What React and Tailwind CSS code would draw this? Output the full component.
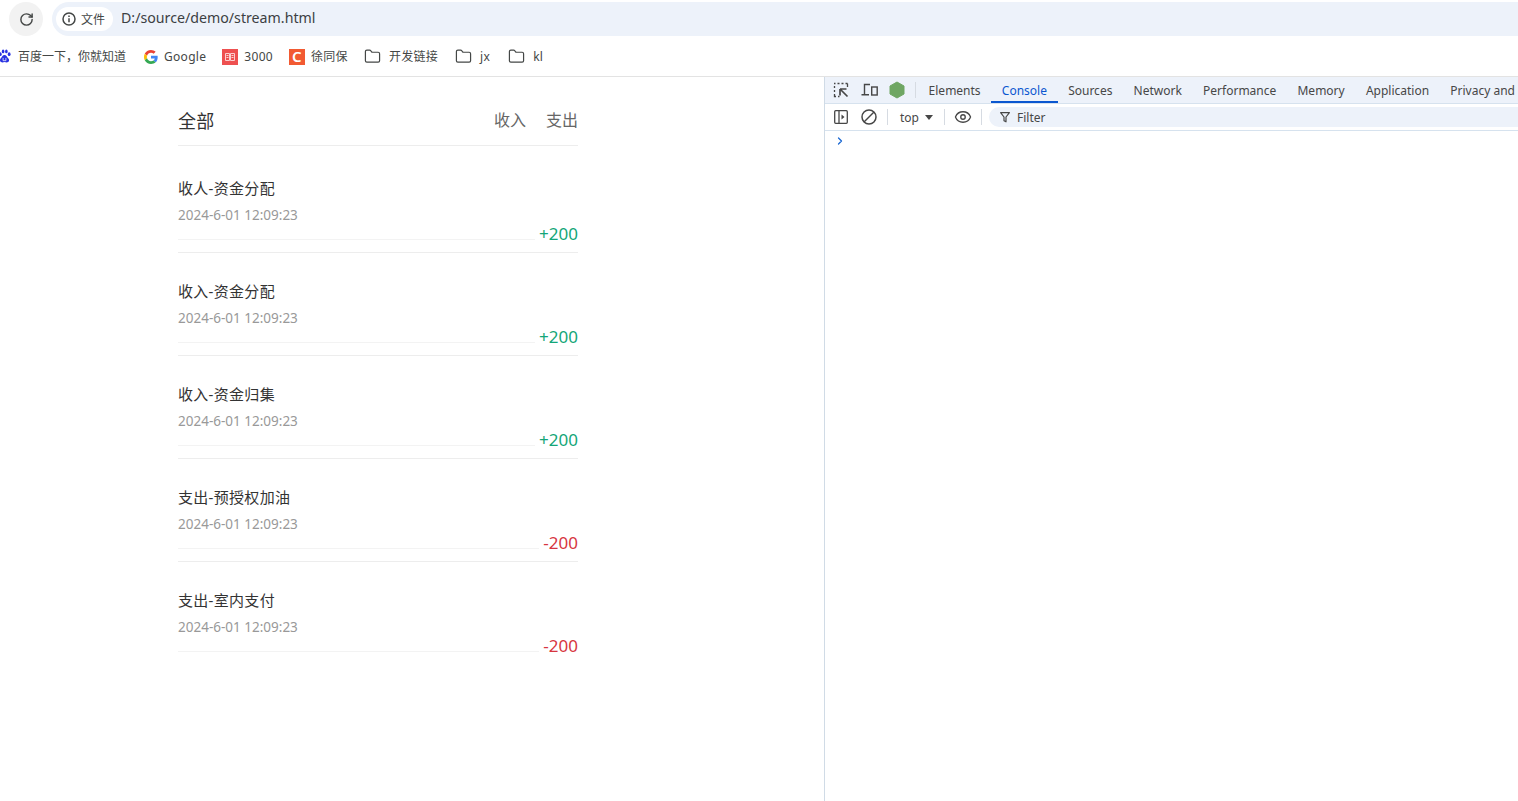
import { RotateCw, Folder, Eye, ChevronRight } from 'lucide-react'

const font = { fontFamily: '"Noto Sans", "Noto Sans CJK SC", sans-serif' }

const rows = [
  { title: '收人-资金分配', amount: '+200', color: 'text-[#14a678]' },
  { title: '收入-资金分配', amount: '+200', color: 'text-[#14a678]' },
  { title: '收入-资金归集', amount: '+200', color: 'text-[#14a678]' },
  { title: '支出-预授权加油', amount: '-200', color: 'text-[#d7363f]' },
  { title: '支出-室内支付', amount: '-200', color: 'text-[#d7363f]' },
]

const tabs = ['Elements', 'Console', 'Sources', 'Network', 'Performance', 'Memory', 'Application', 'Privacy and']

function GoogleIcon() {
  return (
    <svg width="14" height="14" viewBox="0 0 48 48" className="shrink-0">
      <path fill="#EA4335" d="M24 9.500c3.500 0 6.700 1.300 9.100 3.500l6.800-6.800C35.800 2.400 30.300 0 24 0 14.600 0 6.500 5.400 2.600 13.200l7.900 6.100C12.400 13.700 17.700 9.500 24 9.500z" />
      <path fill="#4285F4" d="M46.900 24.500c0-1.600-.1-3.100-.4-4.500H24v9h12.900c-.6 3-2.200 5.500-4.800 7.200l7.700 6c4.500-4.200 7.100-10.300 7.100-17.700z" />
      <path fill="#FBBC05" d="M10.500 28.700c-.5-1.500-.8-3-.8-4.700s.3-3.200.8-4.700l-7.900-6.100C.9 16.500 0 20.100 0 24s.9 7.500 2.600 10.800l7.900-6.100z" />
      <path fill="#34A853" d="M24 48c6.500 0 11.900-2.100 15.900-5.800l-7.700-6c-2.100 1.400-4.900 2.300-8.200 2.300-6.300 0-11.600-4.200-13.500-9.800l-7.900 6.100C6.500 42.600 14.600 48 24 48z" />
    </svg>
  )
}

function BaiduIcon() {
  return (
    <svg width="13" height="15" viewBox="0 0 14 16" fill="#2932e1" className="shrink-0">
      <ellipse cx="2.500" cy="5.500" rx="1.500" ry="2" />
      <ellipse cx="5.500" cy="2.500" rx="1.400" ry="2" />
      <ellipse cx="9" cy="2.500" rx="1.400" ry="2" />
      <ellipse cx="12" cy="5.500" rx="1.500" ry="2" />
      <path d="M7 6.500c-2 0-2.500 2-4 3.500-1.500 1.500-1 4 1 4.300 1.200.2 2-.3 3-.3s2 .5 3.200.3c2-.4 2.300-2.800.8-4.300C9.500 8.500 9 6.500 7 6.500z" />
      <path d="M5.500 9.500v3h3v-3" fill="none" stroke="#fff" strokeWidth="0.800" />
    </svg>
  )
}

function BookIcon() {
  return (
    <span className="flex h-[16px] w-[16px] shrink-0 items-center justify-center bg-[#ee5050]">
      <svg width="10" height="8" viewBox="0 0 10 8" fill="none" stroke="#fbd0d0" strokeWidth="1">
        <path d="M.5.500h4v7h-4zM5.500.500h4v7h-4zM1.500 2.500h2M1.500 4.500h2M6.500 2.500h2M6.500 4.500h2" />
      </svg>
    </span>
  )
}

function Bookmark({ icon, label, className }) {
  return (
    <div className={`flex items-center text-[12px] text-[#444746] ${className}`}>
      {icon}
      <span>{label}</span>
    </div>
  )
}

function FolderIcon() {
  return <Folder size={17} strokeWidth={1.700} className="mr-[8px] shrink-0 text-[#444746]" />
}

function NodeIcon() {
  return (
    <svg width="16" height="18" viewBox="0 0 16 18" className="shrink-0">
      <path fill="#6fa663" stroke="#6fa663" strokeLinejoin="round" d="M8 1 15 5V13L8 17 1 13V5z" />
    </svg>
  )
}

function InspectIcon() {
  return (
    <svg width="16" height="16" viewBox="0 0 16 16" fill="none" stroke="#474747" className="shrink-0">
      <path d="M1 1.500h1.500M4.500 1.500h2M8.500 1.500h2M12.500 1.500h2M1.500 4v2M1.500 8v2M1.500 12v2.500h1.500M14.500 1.500V5M5 14.500h1.500" strokeWidth="1.300" />
      <path d="M7 7h6.500M7 7v6.500M7.500 7.500 14.500 14.500" strokeWidth="1.700" />
    </svg>
  )
}

function DeviceIcon() {
  return (
    <svg width="17" height="16" viewBox="0 0 17 16" fill="none" stroke="#474747" strokeWidth="1.400" className="shrink-0">
      <path d="M9 2.500H3.500V12M0.500 12.700H8" />
      <rect x="10.700" y="5" width="5.500" height="8" />
    </svg>
  )
}

function DockIcon() {
  return (
    <svg width="14" height="14" viewBox="0 0 14 14" fill="none" stroke="#474747" strokeWidth="1.300" className="shrink-0">
      <rect x="0.700" y="0.700" width="12.600" height="12.600" rx="1" />
      <path d="M5 1v12" />
      <path d="M7.500 4.500 10.500 7 7.500 9.500z" fill="#474747" stroke="none" />
    </svg>
  )
}

function ClearIcon() {
  return (
    <svg width="16" height="16" viewBox="0 0 16 16" fill="none" stroke="#474747" strokeWidth="1.500" className="ml-[13px] shrink-0">
      <circle cx="8" cy="8" r="7" />
      <path d="M3 13 13 3" />
    </svg>
  )
}

function FunnelIcon() {
  return (
    <svg width="10" height="11" viewBox="0 0 10 11" fill="none" stroke="#474747" strokeWidth="1.200" className="shrink-0">
      <path d="M.6.700h8.800L6 5v4.800L4 8.700V5z" strokeLinejoin="round" />
    </svg>
  )
}

function InfoIcon() {
  return (
    <svg width="14" height="14" viewBox="0 0 14 14" fill="none" stroke="#444746" strokeWidth="1.500" className="shrink-0">
      <circle cx="7" cy="7" r="6" />
      <path d="M7 6.200V10.300M7 3.600V5" />
    </svg>
  )
}

function Row({ row, last }) {
  return (
    <div className={`pt-[28px] ${last ? '' : 'h-[103px] border-b border-[#ededed]'}`}>
      <div className="h-[62px] border-b border-[#f3f3f3]">
        <div className="text-[15px] leading-[20px] tracking-[0.3px] text-[#333]">{row.title}</div>
        <div className="mt-[7px] text-[13.500px] leading-[20px] text-[#999]">2024-6-01 12:09:23</div>
        <div className="-mt-[1px] flex justify-end">
          <span className={`bg-white pl-[4px] text-[17px] leading-[20px] ${row.color}`}>{row.amount}</span>
        </div>
      </div>
    </div>
  )
}

export default function App() {
  return (
    <div className="flex h-[801px] flex-col overflow-hidden bg-white" style={font}>
      <div className="flex h-[37px] shrink-0 items-start pl-[9px] pt-[2px]">
        <div className="flex h-[34px] w-[34px] items-center justify-center rounded-full bg-[#f2f2f2]">
          <RotateCw size={15} strokeWidth={2.300} className="text-[#444746]" />
        </div>
        <div className="ml-[9px] flex h-[34px] flex-1 items-center rounded-l-[17px] bg-[#edf2fa] pl-[4px]">
          <div className="flex h-[24px] items-center gap-[5px] rounded-full bg-white pl-[6px] pr-[8px]">
            <InfoIcon />
            <span className="pt-[2px] text-[12px] text-[#444746]">文件</span>
          </div>
          <span className="ml-[8px] -mt-[2px] text-[14.200px] text-[#3c4043]">D:/source/demo/stream.html</span>
        </div>
      </div>

      <div className="flex h-[40px] shrink-0 items-center border-b border-[#e3e3e3]">
        <Bookmark className="-ml-[2px]" icon={<span className="mr-[7px]"><BaiduIcon /></span>} label="百度一下，你就知道" />
        <Bookmark className="ml-[18px] tracking-[0.3px]" icon={<span className="mr-[6px]"><GoogleIcon /></span>} label="Google" />
        <Bookmark className="ml-[16px] tracking-[0.3px]" icon={<span className="mr-[6px]"><BookIcon /></span>} label="3000" />
        <Bookmark
          className="ml-[16px] tracking-[0.3px]"
          icon={<span className="mr-[6px] flex h-[16px] w-[16px] shrink-0 items-center justify-center bg-[#f25a32] text-[15px] font-semibold leading-none text-white">C</span>}
          label="徐同保"
        />
        <Bookmark className="ml-[16px] tracking-[0.3px]" icon={<FolderIcon />} label="开发链接" />
        <Bookmark className="ml-[17px] tracking-[0.3px]" icon={<FolderIcon />} label="jx" />
        <Bookmark className="ml-[18px] tracking-[0.3px]" icon={<FolderIcon />} label="kl" />
      </div>

      <div className="flex min-h-0 flex-1">
        <div className="w-[824px] shrink-0 pl-[178px]">
          <div className="w-[400px]">
            <div className="flex h-[69px] items-center justify-between border-b border-[#ededed] pt-[20px]">
              <span className="text-[18px] tracking-[0.3px] text-[#333]">全部</span>
              <div className="-mt-[2px] flex gap-[20px] text-[16px] text-[#666]">
                <span>收入</span>
                <span>支出</span>
              </div>
            </div>
            <div className="pt-[4px]">
              {rows.map((row, i) => (
                <Row key={i} row={row} last={i === rows.length - 1} />
              ))}
            </div>
          </div>
        </div>

        <div className="min-w-0 flex-1 overflow-hidden border-l border-[#d0dbe6]">
          <div className="flex h-[27px] items-center border-b border-[#d6e2ee] bg-[#edf2fa] pl-[8px]">
            <InspectIcon />
            <span className="ml-[12px]"><DeviceIcon /></span>
            <span className="ml-[11px]"><NodeIcon /></span>
            <span className="ml-[10px] h-[16px] w-px shrink-0 bg-[#d6dbe2]" />
            <div className="ml-[2px] flex h-full whitespace-nowrap">
              {tabs.map((t, i) => (
                <div
                  key={t}
                  className={`flex h-full items-center border-b-[2px] px-[10.600px] pt-[4px] text-[12px] ${i === 1 ? 'border-[#0b57d0] text-[#0b57d0]' : 'border-transparent text-[#474747]'}`}
                >
                  {t}
                </div>
              ))}
            </div>
          </div>
          <div className="flex h-[27px] items-center border-b border-[#d6e2ee] pl-[9px]">
            <DockIcon />
            <ClearIcon />
            <span className="ml-[10px] h-[16px] w-px bg-[#d6dbe2]" />
            <span className="ml-[12px] pt-[2px] text-[12px] text-[#474747]">top</span>
            <span className="ml-[6px] h-0 w-0 border-x-[4px] border-t-[5px] border-x-transparent border-t-[#474747]" />
            <span className="ml-[11px] h-[16px] w-px bg-[#d6dbe2]" />
            <Eye size={18} strokeWidth={1.800} className="ml-[9px] text-[#474747]" />
            <span className="ml-[9px] h-[16px] w-px bg-[#d6dbe2]" />
            <div className="ml-[7px] flex h-[20px] flex-1 items-center rounded-l-[10px] bg-[#edf2fa] pl-[11px]">
              <FunnelIcon />
              <span className="ml-[7px] pt-[1px] text-[12px] text-[#474747]">Filter</span>
            </div>
          </div>
          <ChevronRight size={12} strokeWidth={2.500} className="ml-[9px] mt-[4px] text-[#1967d2]" />
        </div>
      </div>
    </div>
  )
}
